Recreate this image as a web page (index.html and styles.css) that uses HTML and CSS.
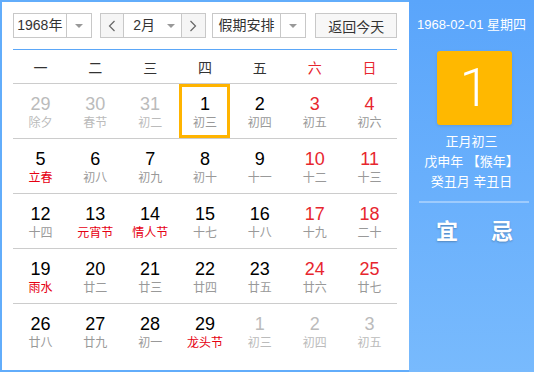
FILE: index.html
```html
<!DOCTYPE html>
<html lang="zh-CN">
<head>
    <meta charset="UTF-8">
    <title>万年历</title>
    <link rel="stylesheet" href="styles.css">
</head>
<body>
    <div class="calendar">
        <div class="main">
            <div class="toolbar">
                <div class="select year-select">
                    <span class="value">1968年</span>
                    <span class="arrow"></span>
                </div>
                <div class="month-group">
                    <span class="nav-btn">
                        <svg width="8" height="12" viewBox="0 0 8 12"><polyline points="6.5,1 1.5,6 6.5,11" fill="none" stroke="#666" stroke-width="1.2"/></svg>
                    </span>
                    <div class="month-select">
                        <span class="value">2月</span>
                        <span class="arrow"></span>
                    </div>
                    <span class="nav-btn">
                        <svg width="8" height="12" viewBox="0 0 8 12"><polyline points="1.5,1 6.5,6 1.5,11" fill="none" stroke="#666" stroke-width="1.2"/></svg>
                    </span>
                </div>
                <div class="select holiday-select">
                    <span class="value">假期安排</span>
                    <span class="arrow"></span>
                </div>
                <button class="today-btn">返回今天</button>
            </div>
            <div class="blue-line"></div>
            <div class="week-head">
                <span>一</span><span>二</span><span>三</span><span>四</span><span>五</span><span class="red">六</span><span class="red">日</span>
            </div>
            <div class="days">
                <div class="cell other"><span class="num">29</span><span class="lunar">除夕</span></div>
                <div class="cell other"><span class="num">30</span><span class="lunar">春节</span></div>
                <div class="cell other"><span class="num">31</span><span class="lunar">初二</span></div>
                <div class="cell today"><span class="num">1</span><span class="lunar">初三</span></div>
                <div class="cell"><span class="num">2</span><span class="lunar">初四</span></div>
                <div class="cell weekend"><span class="num">3</span><span class="lunar">初五</span></div>
                <div class="cell weekend"><span class="num">4</span><span class="lunar">初六</span></div>

                <div class="cell"><span class="num">5</span><span class="lunar fest">立春</span></div>
                <div class="cell"><span class="num">6</span><span class="lunar">初八</span></div>
                <div class="cell"><span class="num">7</span><span class="lunar">初九</span></div>
                <div class="cell"><span class="num">8</span><span class="lunar">初十</span></div>
                <div class="cell"><span class="num">9</span><span class="lunar">十一</span></div>
                <div class="cell weekend"><span class="num">10</span><span class="lunar">十二</span></div>
                <div class="cell weekend"><span class="num">11</span><span class="lunar">十三</span></div>

                <div class="cell"><span class="num">12</span><span class="lunar">十四</span></div>
                <div class="cell"><span class="num">13</span><span class="lunar fest">元宵节</span></div>
                <div class="cell"><span class="num">14</span><span class="lunar fest">情人节</span></div>
                <div class="cell"><span class="num">15</span><span class="lunar">十七</span></div>
                <div class="cell"><span class="num">16</span><span class="lunar">十八</span></div>
                <div class="cell weekend"><span class="num">17</span><span class="lunar">十九</span></div>
                <div class="cell weekend"><span class="num">18</span><span class="lunar">二十</span></div>

                <div class="cell"><span class="num">19</span><span class="lunar fest">雨水</span></div>
                <div class="cell"><span class="num">20</span><span class="lunar">廿二</span></div>
                <div class="cell"><span class="num">21</span><span class="lunar">廿三</span></div>
                <div class="cell"><span class="num">22</span><span class="lunar">廿四</span></div>
                <div class="cell"><span class="num">23</span><span class="lunar">廿五</span></div>
                <div class="cell weekend"><span class="num">24</span><span class="lunar">廿六</span></div>
                <div class="cell weekend"><span class="num">25</span><span class="lunar">廿七</span></div>

                <div class="cell last"><span class="num">26</span><span class="lunar">廿八</span></div>
                <div class="cell last"><span class="num">27</span><span class="lunar">廿九</span></div>
                <div class="cell last"><span class="num">28</span><span class="lunar">初一</span></div>
                <div class="cell last"><span class="num">29</span><span class="lunar fest">龙头节</span></div>
                <div class="cell last other"><span class="num">1</span><span class="lunar">初三</span></div>
                <div class="cell last other"><span class="num">2</span><span class="lunar">初四</span></div>
                <div class="cell last other"><span class="num">3</span><span class="lunar">初五</span></div>
            </div>
        </div>
        <div class="side">
            <div class="side-date">1968-02-01 星期四</div>
            <div class="big-day">1</div>
            <div class="side-lunar">
                <p>正月初三</p>
                <p>戊申年 【猴年】</p>
                <p>癸丑月 辛丑日</p>
            </div>
            <div class="side-line"></div>
            <div class="yiji">
                <span>宜</span>
                <span>忌</span>
            </div>
        </div>
    </div>
</body>
</html>
```

FILE: styles.css
```css
body, html {
    margin: 0;
    padding: 0;
}

body {
    font-family: "Liberation Sans", "Noto Sans CJK SC", sans-serif;
    color: #333;
}

.calendar {
    display: flex;
    width: 534px;
    height: 372px;
}

.main {
    width: 409px;
    box-sizing: border-box;
    border: 2px solid #62adfb;
    border-right: none;
    padding: 11px 12px 0 11px;
    background-color: #fff;
}

/* 顶部工具栏 */
.toolbar {
    display: flex;
    height: 25px;
}

.select, .month-group {
    display: flex;
    box-sizing: border-box;
    border: 1px solid #c8c8c8;
    height: 25px;
    font-size: 14px;
}

.select .value {
    flex: 1;
    text-align: center;
    line-height: 23px;
}

.select .arrow {
    width: 24px;
    border-left: 1px solid #c8c8c8;
}

.arrow {
    display: flex;
    align-items: center;
    justify-content: center;
}

.arrow::after {
    content: '';
    border-left: 4px solid transparent;
    border-right: 4px solid transparent;
    border-top: 4px solid #999;
}

.year-select {
    width: 79px;
}

.month-group {
    width: 106px;
    margin-left: 8px;
}

.nav-btn {
    width: 23px;
    display: flex;
    align-items: center;
    justify-content: center;
    background-color: #f5f5f5;
}

.month-select {
    width: 58px;
    display: flex;
    border-left: 1px solid #c8c8c8;
    border-right: 1px solid #c8c8c8;
}

.month-select .value {
    flex: 1;
    padding-left: 9px;
    line-height: 23px;
}

.month-select .arrow {
    width: 20px;
}

.holiday-select {
    width: 95px;
    margin-left: 6px;
}

.today-btn {
    width: 82px;
    height: 25px;
    margin-left: 9px;
    padding: 0;
    border: 1px solid #c8c8c8;
    background-color: #f7f7f7;
    font-family: inherit;
    font-size: 14px;
    color: #333;
}

.blue-line {
    height: 1px;
    margin-top: 11px;
    background-color: #5ba7f8;
}

/* 星期 */
.week-head {
    display: grid;
    grid-template-columns: repeat(7, 1fr);
    height: 34px;
    line-height: 33px;
    padding-top: 2px;
    box-sizing: border-box;
    border-bottom: 1px solid #ccc;
    text-align: center;
    font-size: 14px;
}

.red {
    color: #e7262e;
}

/* 日期格子 */
.days {
    display: grid;
    grid-template-columns: repeat(7, 1fr);
}

.cell {
    position: relative;
    display: flex;
    flex-direction: column;
    align-items: center;
    height: 55px;
    padding-top: 10px;
    box-sizing: border-box;
    border-bottom: 1px solid #ccc;
}

.cell.last {
    border-bottom: none;
}

.num {
    font-size: 18px;
    line-height: 20px;
    color: #000;
}

.lunar {
    margin-top: 1px;
    font-size: 12px;
    line-height: 16px;
    color: #999;
}

.weekend .num {
    color: #e7262e;
}

.lunar.fest {
    color: #e60012;
}

.other .num, .other .lunar {
    color: #bbb;
}

.today::before {
    content: '';
    position: absolute;
    top: 0;
    bottom: 0;
    left: 1px;
    right: 2px;
    border: 3px solid #ffb400;
}

/* 右侧面板 */
.side {
    width: 125px;
    background: linear-gradient(#5aa5fb, #78bafd);
    color: #fff;
    text-align: center;
    padding-top: 16px;
    box-sizing: border-box;
}

.side-date {
    font-size: 13px;
    line-height: 18px;
}

.big-day {
    width: 75px;
    height: 74px;
    margin: 17px 0 0 28px;
    border-radius: 3px;
    background-color: #ffb800;
    font-family: Roboto, "Liberation Sans", sans-serif;
    font-weight: 300;
    font-size: 54px;
    line-height: 74px;
    box-shadow: 0 1px 3px rgba(0, 0, 0, 0.1);
}

.side-lunar {
    margin-top: 7px;
    font-size: 13px;
}

.side-lunar p {
    margin: 0;
    line-height: 20px;
}

.side-line {
    height: 2px;
    margin: 9px 5px 0 10px;
    background-color: rgba(255, 255, 255, 0.35);
}

.yiji {
    display: flex;
    gap: 33px;
    padding-left: 27px;
    margin-top: 14px;
    font-size: 22px;
    line-height: 30px;
    font-weight: bold;
    text-shadow: 0 1px 2px rgba(0, 0, 0, 0.25);
}
```
